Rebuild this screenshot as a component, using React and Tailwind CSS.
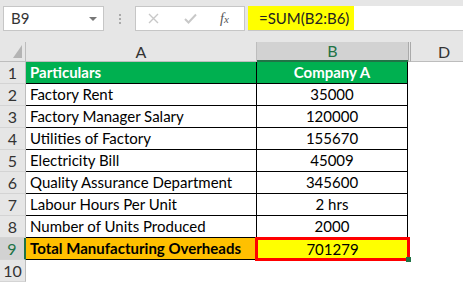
import React from 'react';

const rows = [
  ['Factory Rent', '35000'],
  ['Factory Manager Salary', '120000'],
  ['Utilities of Factory', '155670'],
  ['Electricity Bill', '45009'],
  ['Quality Assurance Department', '345600'],
  ['Labour Hours Per Unit', '2 hrs'],
  ['Number of Units Produced', '2000'],
];

const font = { fontFamily: 'Lato, "Liberation Sans", sans-serif' };

function RowHead({ n, active }) {
  return (
    <div
      className={`w-[26px] shrink-0 h-full flex items-center justify-center text-[16px] text-[#333] border-b border-[#d4d4d4] ${
        active ? 'bg-[#d2d2d2] border-r-2 border-r-[#217346] text-[#217346]' : 'bg-[#e6e6e6] border-r border-r-[#bdbdbd]'
      }`}
    >
      {n}
    </div>
  );
}

export default function App() {
  return (
    <div className="w-[463px] h-[283px] overflow-hidden bg-white text-black" style={font}>
      {/* formula bar */}
      <div className="h-[42px] bg-[#e6e6e6] flex items-start pt-[6px] pl-[3px]">
        <div className="w-[101px] h-[25px] bg-white border border-[#c6c6c6] flex items-center justify-between pl-[7px] pr-[6px] text-[15px] text-[#333]">
          <span>B9</span>
          <span className="w-0 h-0 border-l-[4px] border-r-[4px] border-t-[4px] border-l-transparent border-r-transparent border-t-[#777]" />
        </div>
        <div className="w-[31px] h-[25px] flex flex-col items-center justify-center gap-[2px]">
          <span className="w-[2px] h-[2px] bg-[#aaa]" />
          <span className="w-[2px] h-[2px] bg-[#aaa]" />
          <span className="w-[2px] h-[2px] bg-[#aaa]" />
        </div>
        <div className="w-[110px] h-[25px] bg-white border border-[#c6c6c6] flex items-center">
          <svg className="ml-[12px]" width="11" height="11" viewBox="0 0 11 11">
            <path d="M1 1L10 10M10 1L1 10" stroke="#c8c8c8" strokeWidth="1.4" />
          </svg>
          <svg className="ml-[25px]" width="13" height="11" viewBox="0 0 13 11">
            <path d="M1 6L4.5 9.5L12 1.5" stroke="#c8c8c8" strokeWidth="2" fill="none" />
          </svg>
          <span className="ml-[23px] text-[14px] italic text-[#555]" style={{ fontFamily: '"Liberation Serif", serif' }}>
            f<span className="text-[11px]">x</span>
          </span>
        </div>
        <div className="ml-[3px] flex-1 h-[25px] bg-white border-b border-[#c6c6c6] flex">
          <div className="w-[106px] h-full bg-[#ffff00] flex items-center pl-[11px] text-[15px] text-[#222]">
            =SUM(B2:B6)
          </div>
        </div>
      </div>

      {/* column headers */}
      <div className="h-[20px] flex bg-[#e6e6e6] text-[16px] text-[#333]">
        <div className="w-[26px] shrink-0 relative border-r border-[#bdbdbd] border-b border-b-[#bdbdbd]">
          <span className="absolute right-[3px] bottom-[3px] w-0 h-0 border-l-[10px] border-t-[13px] border-l-transparent border-t-transparent border-b-0 border-r-[0px]" style={{ borderBottom: '13px solid #b4b4b4', borderLeft: '9px solid transparent', borderTop: 0 }} />
        </div>
        <div className="w-[231px] shrink-0 flex items-center justify-center border-r border-[#bdbdbd] border-b border-b-[#bdbdbd]">A</div>
        <div className="w-[151px] shrink-0 flex items-center justify-center bg-[#d2d2d2] border-b-2 border-b-[#217346] text-[#217346]">B</div>
        <div className="w-[3px] shrink-0 border-x border-[#aaa] border-b border-b-[#bdbdbd]" />
        <div className="w-[66px] shrink-0 flex items-center justify-center border-b border-[#bdbdbd]">D</div>
      </div>

      {/* row 1 */}
      <div className="h-[22px] flex">
        <RowHead n={1} />
        <div className="w-[231px] shrink-0 bg-[#00b050] text-white font-bold text-[15px] flex items-center pl-[4px] border-r border-b border-black">
          Particulars
        </div>
        <div className="w-[151px] shrink-0 bg-[#00b050] text-white font-bold text-[15px] flex items-center justify-center border-r border-b border-black">
          Company A
        </div>
      </div>

      {rows.map(([label, value], i) => (
        <div key={label} className="h-[22px] flex">
          <RowHead n={i + 2} />
          <div className="w-[231px] shrink-0 text-[15px] flex items-center pl-[4px] border-r border-b border-black">{label}</div>
          <div className="w-[151px] shrink-0 text-[15px] flex items-center justify-center border-r border-b border-black">{value}</div>
        </div>
      ))}

      {/* row 9 */}
      <div className="h-[22px] flex">
        <RowHead n={9} active />
        <div className="w-[229px] shrink-0 bg-[#ffc000] font-bold text-[15px] flex items-center pl-[4px] border-b border-black">
          Total Manufacturing Overheads
        </div>
        <div className="relative w-[155px] -mt-[1px] h-[24px] shrink-0 bg-[#ffff00] text-[15px] flex items-center justify-center border-[3px] border-[#ff0000]">
          701279
          <span className="absolute -right-[4px] -bottom-[4px] w-[5px] h-[5px] bg-[#217346]" />
        </div>
      </div>

      {/* row 10 */}
      <div className="h-[22px] flex">
        <RowHead n={10} />
      </div>
    </div>
  );
}
